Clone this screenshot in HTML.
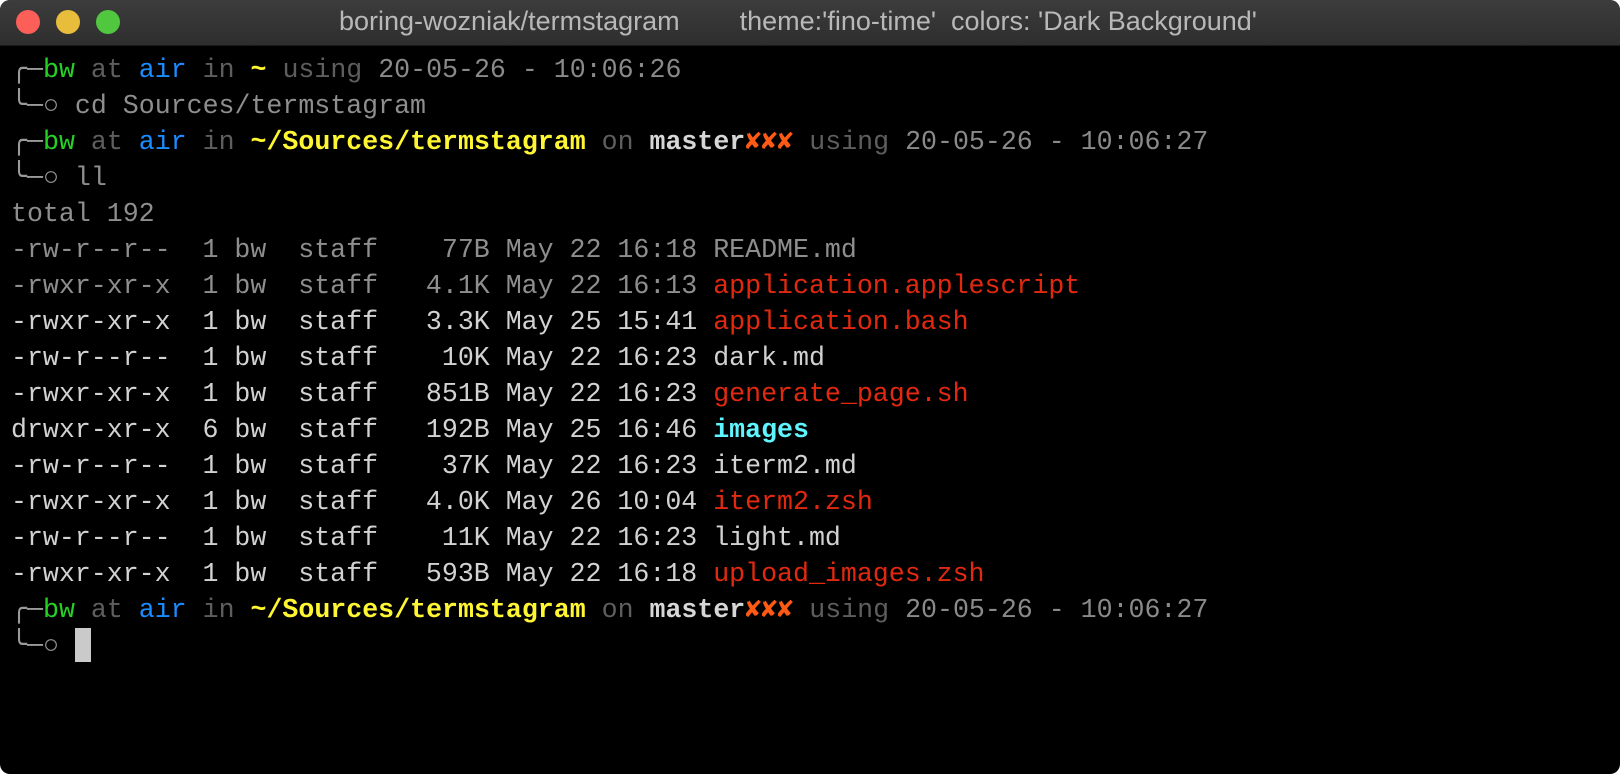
<!DOCTYPE html>
<html><head><meta charset="utf-8"><style>
html,body{margin:0;padding:0;background:transparent;}
body{width:1620px;height:774px;overflow:hidden;}
.win{position:absolute;left:0;top:0;width:1620px;height:774px;background:#000;border-radius:10px;overflow:hidden;}
.tb{position:absolute;left:0;top:0;width:1620px;height:45px;background:linear-gradient(#3c3c3c,#2e2e2e);border-bottom:1px solid #1a1a1a;}
.dot{position:absolute;top:10px;width:24px;height:24px;border-radius:50%;}
.title{position:absolute;left:339px;top:6px;font:27px "Liberation Sans",sans-serif;color:#b8b8b8;white-space:pre;}
.term{position:absolute;left:11px;top:52px;font-family:"Liberation Mono","DejaVu Sans Mono",monospace;font-size:26.6px;line-height:36px;white-space:pre;color:#d2d2d2;}
.g{color:#26d126}.b{color:#1a8cff}.y{color:#fff633;font-weight:bold}.d{color:#5e5e5e}.t{color:#8a8a8a}
.r{color:#e2290f}.c{color:#5ff5ff;font-weight:bold}.o{color:#ff5a14;font-weight:bold}.m{color:#d6d6d6;font-weight:bold}
.l{color:#9a9a9a}.dim{color:#8e8e8e}
.cur{display:inline-block;width:16px;height:34px;background:#cacaca;vertical-align:-9px;}
</style></head><body>
<div class="win">
<div class="tb">
<div class="dot" style="left:16px;background:#fc5f57"></div>
<div class="dot" style="left:56px;background:#e8bd3b"></div>
<div class="dot" style="left:96px;background:#50c73f"></div>
<div class="title">boring-wozniak/termstagram        theme:'fino-time'  colors: 'Dark Background'</div>
</div>
<div class="term"><span class="l">╭─</span><span class="g">bw</span> <span class="d">at</span> <span class="b">air</span> <span class="d">in</span> <span class="y">~</span> <span class="d">using</span> <span class="t">20-05-26 - 10:06:26</span>
<span class="l">╰─○</span> <span class="dim">cd Sources/termstagram</span>
<span class="l">╭─</span><span class="g">bw</span> <span class="d">at</span> <span class="b">air</span> <span class="d">in</span> <span class="y">~/Sources/termstagram</span> <span class="d">on</span> <span class="m">master</span><span class="o">✘✘✘</span> <span class="d">using</span> <span class="t">20-05-26 - 10:06:27</span>
<span class="l">╰─○</span> <span class="dim">ll</span>
<span class="dim">total 192</span>
<span class="dim">-rw-r--r--  1 bw  staff    77B May 22 16:18 README.md</span>
<span class="dim">-rwxr-xr-x  1 bw  staff   4.1K May 22 16:13 </span><span class="r">application.applescript</span>
-rwxr-xr-x  1 bw  staff   3.3K May 25 15:41 <span class="r">application.bash</span>
-rw-r--r--  1 bw  staff    10K May 22 16:23 dark.md
-rwxr-xr-x  1 bw  staff   851B May 22 16:23 <span class="r">generate_page.sh</span>
drwxr-xr-x  6 bw  staff   192B May 25 16:46 <span class="c">images</span>
-rw-r--r--  1 bw  staff    37K May 22 16:23 iterm2.md
-rwxr-xr-x  1 bw  staff   4.0K May 26 10:04 <span class="r">iterm2.zsh</span>
-rw-r--r--  1 bw  staff    11K May 22 16:23 light.md
-rwxr-xr-x  1 bw  staff   593B May 22 16:18 <span class="r">upload_images.zsh</span>
<span class="l">╭─</span><span class="g">bw</span> <span class="d">at</span> <span class="b">air</span> <span class="d">in</span> <span class="y">~/Sources/termstagram</span> <span class="d">on</span> <span class="m">master</span><span class="o">✘✘✘</span> <span class="d">using</span> <span class="t">20-05-26 - 10:06:27</span>
<span class="l">╰─○</span> <span class="cur"></span></div>
</div>
</body></html>
